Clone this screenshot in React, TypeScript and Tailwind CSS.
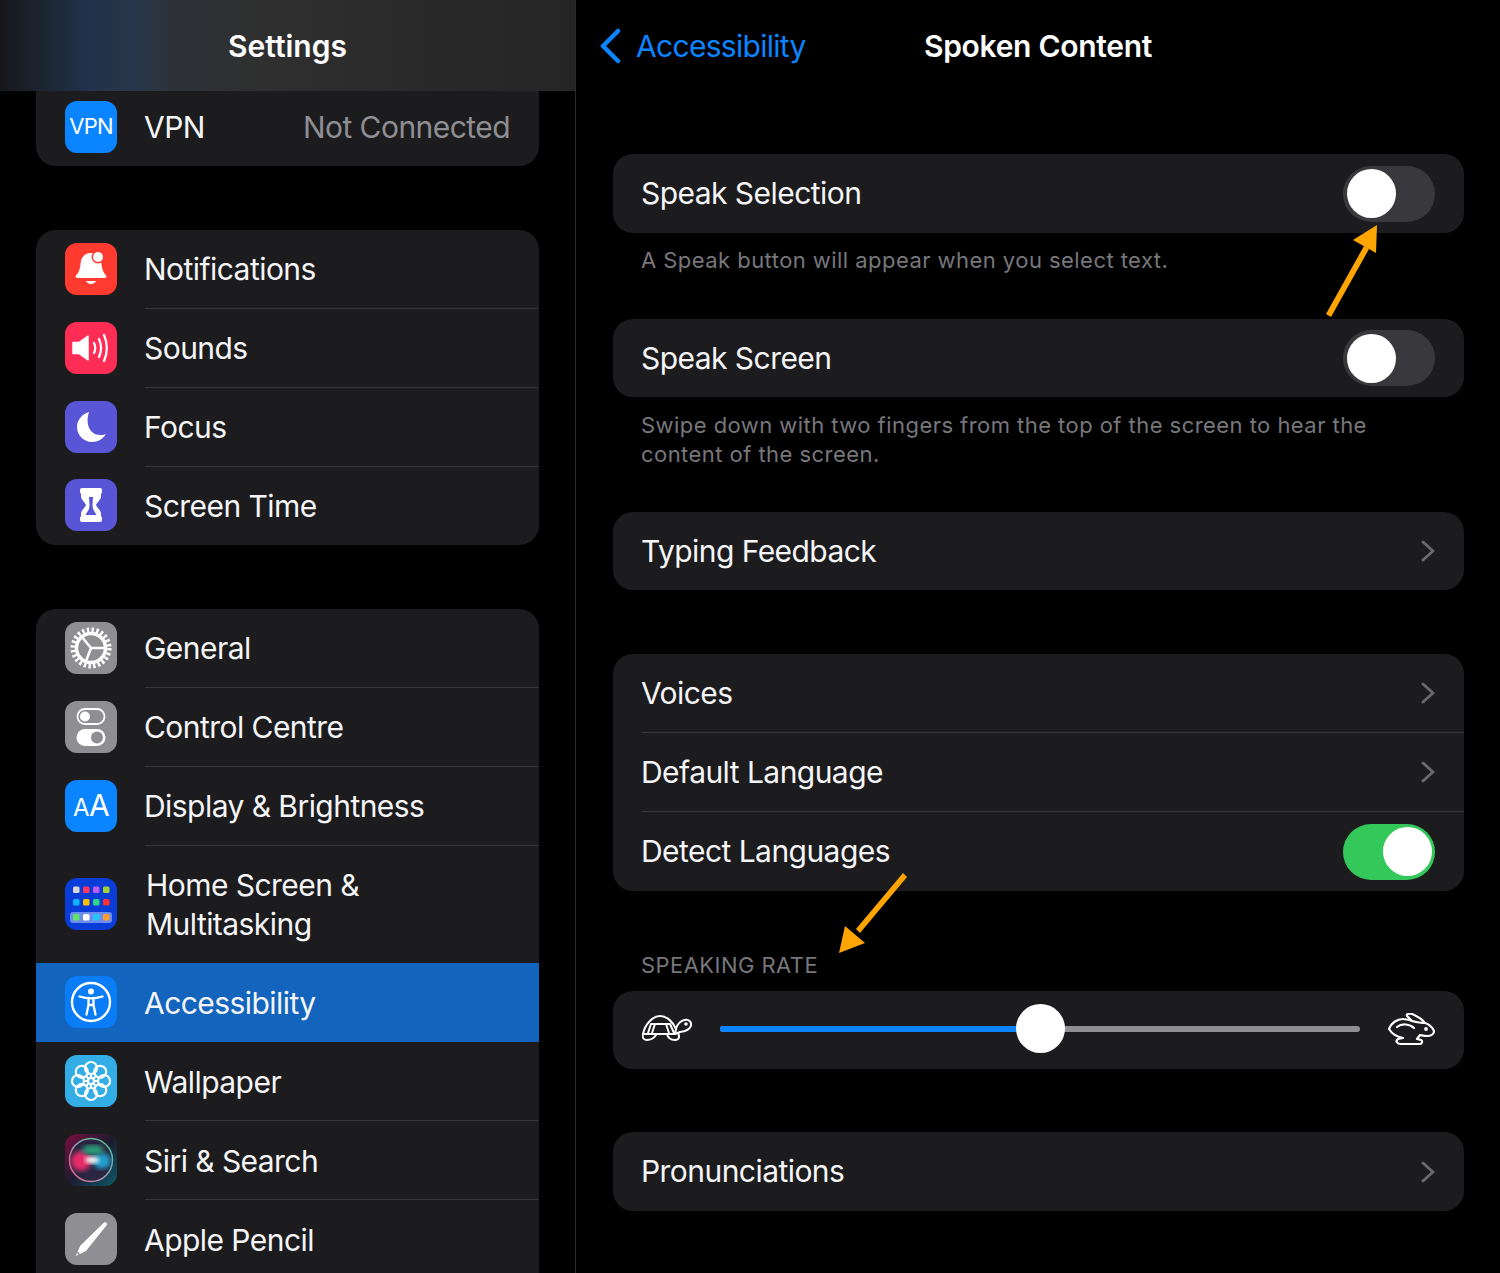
import type { ReactNode } from 'react';

function VpnIcon() {
  return <div className="w-[52px] h-[52px] shrink-0 rounded-xl bg-[#0a84ff] flex items-center justify-center text-[22px] tracking-[-0.8px] text-white">VPN</div>;
}

function Tile({ bg, children }: { bg: string; children: ReactNode }) {
  return (
    <svg viewBox="0 0 52 52" className="w-[52px] h-[52px] shrink-0">
      <rect width="52" height="52" rx="12" fill={bg} />
      {children}
    </svg>
  );
}

const BellIcon = () => (
  <Tile bg="#ff3b30">
    <path d="M26 10c-7 0-10 5-10.500 11-.4 5-1.500 8-4.500 11.500-.8 1-.3 2.500 1 2.500h28c1.300 0 1.800-1.500 1-2.500-3-3.500-4-6.500-4.500-11.500-.5-6-3.500-11-10.500-11z" fill="#fff" />
    <path d="M21 38h10c-.8 2-2.800 3-5 3s-4.200-1-5-3z" fill="#fff" />
    <circle cx="33" cy="14" r="6.500" fill="#ff3b30" />
    <circle cx="33" cy="14" r="5" fill="#fff" />
  </Tile>
);

const SoundIcon = () => (
  <Tile bg="#ff2d55">
    <path d="M8 20.500h6L23 14v24l-9-6.500H8z" fill="#fff" stroke="#fff" strokeWidth="1.500" strokeLinejoin="round" />
    <g fill="none" stroke="#fff" strokeWidth="2.200" strokeLinecap="round">
      <path d="M29 21c1.500 3 1.500 7 0 10" />
      <path d="M34 17c2.500 5.500 2.500 12.500 0 18" />
      <path d="M39 13c3.500 8 3.500 18 0 26" />
    </g>
  </Tile>
);

const MoonIcon = () => (
  <Tile bg="#5856d6">
    <path d="M24 11c-7 2-12 8-12 15 0 8.500 7 15 15 15 6 0 11-3 14-8-2 1-4 1-6 1-10 0-15-11-11-23z" fill="#fff" />
  </Tile>
);

const HourglassIcon = () => (
  <Tile bg="#5856d6">
    <rect x="15" y="9" width="22" height="6" rx="2" fill="#fff" />
    <rect x="15" y="37" width="22" height="6" rx="2" fill="#fff" />
    <path d="M16 12h20v5c0 4-4 6-5 9 1 3 5 5 5 9v5H16v-5c0-4 4-6 5-9-1-3-5-5-5-9z" fill="#fff" />
    <path d="M24 18h4l-.5 8 .5 4 3.500 6h-11l3.500-6 .5-4z" fill="#5856d6" />
  </Tile>
);

const GearIcon = () => (
  <Tile bg="#8e8e93">
    <circle cx="26" cy="26" r="18" fill="none" stroke="#fff" strokeWidth="5" strokeDasharray="2.400 2.312" />
    <circle cx="26" cy="26" r="14.500" fill="none" stroke="#fff" strokeWidth="3.500" />
    <g stroke="#fff" strokeWidth="2.500" fill="none">
      <path d="M26 26L17 15" />
      <path d="M26 26h14" />
      <path d="M26 26l-5 13" />
    </g>
  </Tile>
);

const ControlIcon = () => (
  <Tile bg="#8e8e93">
    <rect x="12.500" y="8" width="27" height="15" rx="7.500" fill="none" stroke="#fff" strokeWidth="1.800" />
    <circle cx="20" cy="15.500" r="5" fill="#fff" />
    <rect x="11.500" y="28" width="29" height="17" rx="8.500" fill="#fff" />
    <circle cx="32" cy="36.500" r="6" fill="#8e8e93" />
  </Tile>
);

function DisplayIcon() {
  return (
    <div className="w-[52px] h-[52px] shrink-0 rounded-xl bg-[#0a84ff] flex items-baseline justify-center pt-[10px] text-white">
      <span className="text-[24px] leading-none">A</span>
      <span className="text-[30px] leading-none">A</span>
    </div>
  );
}

const HomeIcon = () => {
  const row1 = ['#d8d8dc', '#ff375f', '#bf5af2', '#a4d233'];
  const row2 = ['#0fb5ff', '#ffc000', '#30d58a', '#ff3030'];
  const row3 = ['#5ee66a', '#ffffff', '#22c8ff', '#ff9f2e'];
  return (
    <Tile bg="#0a3cd8">
      {row1.map((c, i) => <rect key={c} x={8 + i * 10} y="8.500" width="6.500" height="6.500" rx="1.500" fill={c} />)}
      {row2.map((c, i) => <rect key={c} x={8 + i * 10} y="21" width="6.500" height="6.500" rx="1.500" fill={c} />)}
      <rect x="5" y="34" width="42" height="11" rx="3" fill="#6d8df0" />
      {row3.map((c, i) => <rect key={c} x={8 + i * 10} y="36" width="6.500" height="6.500" rx="1.500" fill={c} />)}
    </Tile>
  );
};

const AccessIcon = () => (
  <Tile bg="#0a7cf5">
    <circle cx="26" cy="26" r="19" fill="none" stroke="#fff" strokeWidth="2.400" />
    <circle cx="26" cy="15.500" r="3" fill="#fff" />
    <path d="M14.500 20.500c4 1.200 7.500 1.800 11.500 1.800s7.500-.6 11.500-1.800" fill="none" stroke="#fff" strokeWidth="2.300" strokeLinecap="round" />
    <path d="M23.500 22v7l-2 9.500M28.500 22v7l2 9.500M23.500 29h5" fill="none" stroke="#fff" strokeWidth="2.300" strokeLinecap="round" />
  </Tile>
);

const WallpaperIcon = () => (
  <Tile bg="#32ade6">
    <g fill="none" stroke="#fff" strokeWidth="2.200">
      {[0, 45, 90, 135, 180, 225, 270, 315].map((a) => (
        <g key={a} transform={`rotate(${a} 26 26)`}>
          <circle cx="26" cy="13" r="6" />
          <path d="M26 22.500v-3.500" />
        </g>
      ))}
      <circle cx="26" cy="26" r="3" />
    </g>
  </Tile>
);

const SiriIcon = () => (
  <svg viewBox="0 0 52 52" className="w-[52px] h-[52px] shrink-0">
    <defs>
      <linearGradient id="siriBg" x1="0" y1="0" x2="1" y2="1">
        <stop offset="0" stopColor="#7a1040" />
        <stop offset="0.5" stopColor="#1c1a30" />
        <stop offset="1" stopColor="#0d5a6a" />
      </linearGradient>
      <linearGradient id="siriRing" x1="0" y1="1" x2="1" y2="0">
        <stop offset="0" stopColor="#e8648c" />
        <stop offset="0.5" stopColor="#9a9ab0" />
        <stop offset="1" stopColor="#3fd08a" />
      </linearGradient>
      <filter id="siriBlur"><feGaussianBlur stdDeviation="2.500" /></filter>
      <filter id="siriBlur2"><feGaussianBlur stdDeviation="2" /></filter>
    </defs>
    <rect width="52" height="52" rx="12" fill="url(#siriBg)" />
    <circle cx="26" cy="26" r="21.500" fill="#2a2540" stroke="url(#siriRing)" strokeWidth="1.500" />
    <ellipse cx="16" cy="27" rx="10" ry="10" fill="#e82a68" filter="url(#siriBlur)" />
    <ellipse cx="37" cy="27" rx="9" ry="8" fill="#249fd0" filter="url(#siriBlur)" />
    <ellipse cx="28" cy="16" rx="11" ry="5" fill="#2b9f7a" filter="url(#siriBlur)" />
    <ellipse cx="27" cy="26" rx="7" ry="3.500" fill="#fff" filter="url(#siriBlur2)" />
  </svg>
);

const PencilIcon = () => (
  <Tile bg="#8e8e93">
    <path d="M39 9.500c1.600-1.200 3.800.8 2.800 2.500L21 38l-6 3-2.500-2.500 3-6z" fill="#fff" />
    <path d="M12 40l-1.500 3 3-1.500z" fill="#fff" />
  </Tile>
);

function Toggle({ on }: { on?: boolean }) {
  return (
    <div className={`w-[92px] h-[56px] rounded-full flex items-center ${on ? 'bg-[#34c759] justify-end pr-[3px]' : 'bg-[#39393d] justify-start pl-[4px]'}`}>
      <div className="w-[49px] h-[49px] rounded-full bg-white" />
    </div>
  );
}

function Chevron() {
  return (
    <svg viewBox="0 0 14 22" className="w-[14px] h-[22px]">
      <path d="M2 2l10 9-10 9" fill="none" stroke="#68686d" strokeWidth="3" strokeLinecap="round" strokeLinejoin="round" />
    </svg>
  );
}

function SideRow({ icon, label, last, selected, h = 'h-[79px]', value }: {
  icon: ReactNode; label: ReactNode; last?: boolean; selected?: boolean; h?: string; value?: string;
}) {
  return (
    <div className={`flex items-center pl-[29px] ${h} ${selected ? 'bg-[#1264bd]' : ''}`}>
      <div className="mb-[2px] shrink-0">{icon}</div>
      <div className={`ml-[28px] flex-1 h-full flex items-center justify-between pr-[29px] ${last || selected ? '' : 'border-b border-[#38383a]'}`}>
        <span className="-ml-px">{label}</span>
        {value && <span className="text-[#8e8e93]">{value}</span>}
      </div>
    </div>
  );
}

function SetRow({ label, right, last, h = 'h-[79px]' }: { label: string; right: ReactNode; last?: boolean; h?: string }) {
  return (
    <div className={`${h} pl-[29px] flex`}>
      <div className={`flex-1 flex items-center justify-between pr-[29px] ${last ? '' : 'border-b border-[#38383a]'}`}>
        <span className="-ml-px">{label}</span>
        {right}
      </div>
    </div>
  );
}

export default function App() {
  return (
    <div className="relative w-[1500px] h-[1273px] overflow-hidden bg-black flex text-[#f5f5f7] text-[30px] tracking-[-0.55px] font-['Inter',sans-serif]">
      {/* Sidebar */}
      <div className="w-[576px] h-full border-r border-[#2c2c2e] shrink-0 overflow-hidden">
        <div className="h-[91px] pt-px flex items-center justify-center font-semibold tracking-[0px] bg-[linear-gradient(90deg,#16181c_0%,#1c2430_7%,#22324a_15%,#28364a_24%,#2e3238_30%,#2f2f2f_45%,#252525_100%)] text-white">Settings</div>
        <div className="mx-[36px]">
          <div className="bg-[#1c1c1e] rounded-b-[20px] overflow-hidden">
            <SideRow h="h-[75px] pb-[2px]" icon={<VpnIcon />} label="VPN" value="Not Connected" last />
          </div>
          <div className="bg-[#1c1c1e] rounded-[20px] overflow-hidden mt-[64px]">
            <SideRow icon={<BellIcon />} label="Notifications" />
            <SideRow icon={<SoundIcon />} label="Sounds" />
            <SideRow icon={<MoonIcon />} label="Focus" />
            <SideRow h="h-[78px]" icon={<HourglassIcon />} label="Screen Time" last />
          </div>
          <div className="bg-[#1c1c1e] rounded-t-[20px] overflow-hidden mt-[64px]">
            <SideRow icon={<GearIcon />} label="General" />
            <SideRow icon={<ControlIcon />} label="Control Centre" />
            <SideRow icon={<DisplayIcon />} label="Display & Brightness" />
            <SideRow h="h-[117px]" last icon={<HomeIcon />} label={<span className="block pl-[2px] leading-[39px]">Home Screen &<br />Multitasking</span>} />
            <SideRow selected icon={<AccessIcon />} label={<span className="block pt-[2px]">Accessibility</span>} />
            <SideRow icon={<WallpaperIcon />} label={<span className="block pt-[2px]">Wallpaper</span>} />
            <SideRow icon={<SiriIcon />} label={<span className="block pt-[2px]">Siri & Search</span>} />
            <SideRow icon={<PencilIcon />} label={<span className="block pt-[2px]">Apple Pencil</span>} last />
          </div>
        </div>
      </div>

      {/* Detail */}
      <div className="flex-1 min-w-0">
        <div className="h-[91px] pt-px grid grid-cols-[1fr_auto_1fr] items-center">
          <div className="flex items-center pl-[24px] gap-[15px] text-[#0a84ff] tracking-[-0.7px]">
            <svg viewBox="0 0 21 36" className="w-[21px] h-[36px]">
              <path d="M18 3L3 18l15 15" fill="none" stroke="#0a84ff" strokeWidth="4.500" strokeLinecap="round" strokeLinejoin="round" />
            </svg>
            <span>Accessibility</span>
          </div>
          <div className="font-semibold text-white tracking-[-0.3px]">Spoken Content</div>
          <div />
        </div>

        <div className="ml-[37px] mr-[36px] mt-[63px]">
          <div className="bg-[#1c1c1e] rounded-[20px]">
            <SetRow label="Speak Selection" right={<Toggle />} last />
          </div>
          <p className="h-[86px] pl-[28px] pt-[13px] text-[22px] leading-[29px] tracking-[0.45px] text-[#77777c]">A Speak button will appear when you select text.</p>
          <div className="bg-[#1c1c1e] rounded-[20px]">
            <SetRow h="h-[78px]" label="Speak Screen" right={<Toggle />} last />
          </div>
          <p className="h-[115px] pl-[28px] pr-[60px] pt-[14px] text-[22px] leading-[29px] tracking-[0.45px] text-[#77777c]">Swipe down with two fingers from the top of the screen to hear the content of the screen.</p>
          <div className="bg-[#1c1c1e] rounded-[20px]">
            <SetRow h="h-[78px]" label="Typing Feedback" right={<Chevron />} last />
          </div>
          <div className="bg-[#1c1c1e] rounded-[20px] mt-[64px] overflow-hidden">
            <SetRow label="Voices" right={<Chevron />} />
            <SetRow label="Default Language" right={<Chevron />} />
            <SetRow label="Detect Languages" right={<Toggle on />} last />
          </div>
          <div className="h-[100px] pl-[28px] pb-[11px] flex items-end text-[22px] leading-[29px] tracking-[0.45px] text-[#77777c]">SPEAKING RATE</div>
          <div className="bg-[#1c1c1e] rounded-[20px] h-[78px] flex items-center pl-[29px] pr-[29px]">
            <svg viewBox="0 0 52 28" className="w-[52px] h-[28px] shrink-0 mb-[3px]" fill="none" stroke="#fff" strokeWidth="2" strokeLinecap="round" strokeLinejoin="round">
              <path d="M1 19C3 9 11 1 18 1c7 0 13 6 16 13l-1 5z" />
              <path d="M9 9h19M9 9l-3 9M28 9l4 9M13 9l-3 9M24 9l3 9" />
              <path d="M34 14C36 6 46 1 49 8c1 5-5 9-11 9l-5 2" />
              <path d="M1 19c-1 3 0 6 4 6s7-2 9-5M25 19c1 4 4 6 8 6s5-3 3-7" />
              <circle cx="44" cy="9" r="0.800" fill="#fff" />
            </svg>
            <div className="relative flex-1 h-[6px] ml-[26px] mr-[28px] mb-[2px] rounded-full bg-[#8e8e93]">
              <div className="h-full w-[320px] rounded-full bg-[#0a84ff]" />
              <div className="absolute left-[296px] top-[-22px] w-[49px] h-[49px] rounded-full bg-white" />
            </div>
            <svg viewBox="0 0 47 33" className="w-[47px] h-[33px] shrink-0 mb-[2px]" fill="none" stroke="#fff" strokeWidth="2.200" strokeLinecap="round" strokeLinejoin="round">
              <path d="M1 16C3 10 9 6 15 6c3 0 6 1 9 2l-5-5c-1-2 2-3 5-2 5 2 10 5 13 9 4 1 8 5 9 8 0 3-3 5-7 5-3 0-6-1-7-1l-3 4 4 1c2 1 1 4-1 4H13c-4 0-6-3-3-5l5-1c-5-1-11-4-14-9z" />
              <path d="M9 14c5-4 13-3 17 1M24 8c4 1 8 2 13 2" />
              <circle cx="38" cy="16" r="0.800" fill="#fff" />
            </svg>
          </div>
          <div className="bg-[#1c1c1e] rounded-[20px] mt-[63px]">
            <SetRow label="Pronunciations" right={<Chevron />} last />
          </div>
        </div>
      </div>

      {/* Annotation arrows */}
      <svg viewBox="0 0 1500 1273" className="absolute inset-0 w-[1500px] h-[1273px] pointer-events-none">
        <g fill="#ffa500" stroke="none">
          <path d="M1377 225l-24 15 23 13z" />
          <path d="M1326 314l38-68 5 3-38 68z" />
          <path d="M839 953l6-27 20 17z" />
          <path d="M903 873l4 4-47 56-4-4z" />
        </g>
      </svg>
    </div>
  );
}
